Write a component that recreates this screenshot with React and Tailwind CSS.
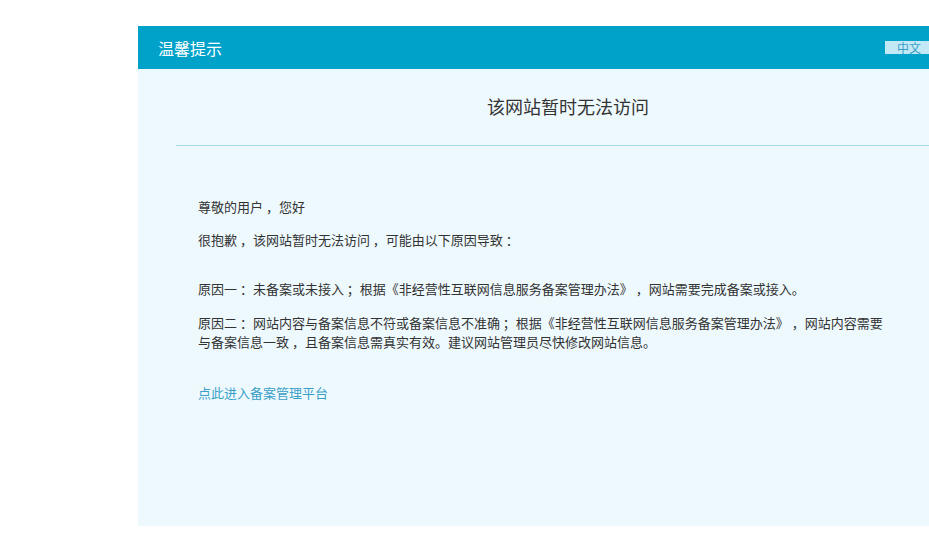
export default function App() {
  return (
    <div className="w-[929px] h-[556px] overflow-hidden bg-white" style={{fontFamily:'"Noto Sans CJK SC", sans-serif'}}>
      <div className="ml-[138px] mt-[26px] w-[860px]">
        <div className="h-[43px] bg-[#00a2ca] flex items-center justify-between pl-[20px] pr-[65px]">
          <span className="text-white text-[16px]">温馨提示</span>
          <span className="bg-[#c3e9f6] text-[#3a9fc7] text-[12px] leading-[13px] h-[13px] px-[12px]">中文</span>
        </div>
        <div className="bg-[#eef9fe] h-[457px] pt-[24px]">
          <div className="text-center text-[18px] text-[#333] leading-[26px]">该网站暂时无法访问</div>
          <div className="mx-[38px] mt-[26px] border-t border-[#a8daea]"></div>
          <div className="pl-[60px] w-[860px] text-[13px] text-[#333] leading-[18px] pt-[52px] whitespace-nowrap">
            <p>尊敬的用户 ，您好</p>
            <p className="mt-[15px]">很抱歉 ，该网站暂时无法访问 ，可能由以下原因导致 ：</p>
            <p className="mt-[31px]">原因一 ：未备案或未接入 ；根据《非经营性互联网信息服务备案管理办法》 ，网站需要完成备案或接入。</p>
            <p className="mt-[15px] leading-[19px]">原因二 ：网站内容与备案信息不符或备案信息不准确 ；根据《非经营性互联网信息服务备案管理办法》 ，网站内容需要<br/>与备案信息一致 ，且备案信息需真实有效。建议网站管理员尽快修改网站信息。</p>
            <p className="mt-[33px] text-[#3a9fc7]">点此进入备案管理平台</p>
          </div>
        </div>
      </div>
    </div>
  );
}
